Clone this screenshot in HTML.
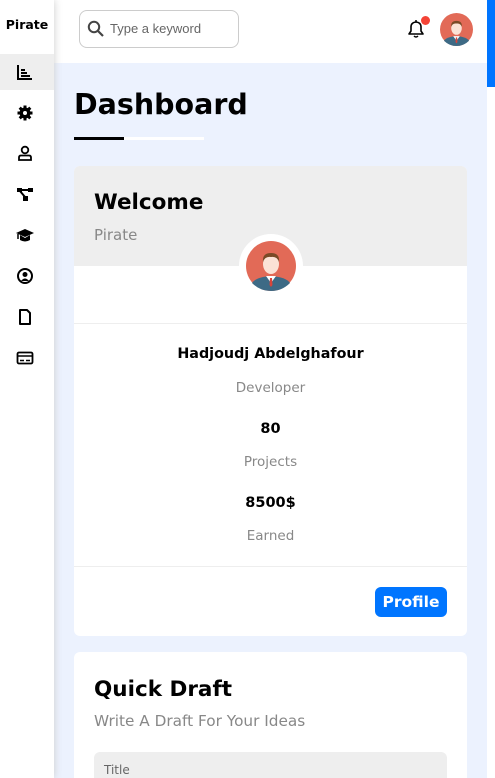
<!DOCTYPE html>
<html><head><meta charset="utf-8"><style>
*{margin:0;padding:0;box-sizing:border-box}
html{overflow:hidden;width:495px;height:778px}
body{width:495px;height:778px;overflow:hidden;background:#ecf2fe;font-family:"DejaVu Sans","Liberation Sans",sans-serif;position:relative}
.a{position:absolute}
.side{left:0;top:0;width:54px;height:778px;background:#fff;box-shadow:0 0 8px #ccc;z-index:3}
.ic{position:absolute;left:16px;width:18px;height:18px}
.head{left:54px;top:0;width:433px;height:63px;background:#fff}
.card{background:#fff;border-radius:6px;overflow:hidden}
.c{text-align:center;width:393px;left:0}
.g{color:#888;font-size:14px}
.b{font-weight:bold;font-size:15px;color:#000}
</style></head><body>
<div class="a side">
<div class="a" style="left:0;top:17px;width:54px;text-align:center;font-weight:bold;font-size:12.5px">Pirate</div>
<div class="a" style="left:0;top:54px;width:54px;height:36px;background:#eee"></div>
<svg class="ic" style="top:63px" viewBox="0 0 18 18"><path d="M2 2V16H16M5 13H14M5 10H11M5 7H9" stroke="#000" stroke-width="2" fill="none"/></svg>
<svg class="ic" style="top:104px" viewBox="0 0 18 18"><circle cx="9" cy="9" r="5.5" fill="#000"/><path d="M9 1.5V16.5M1.5 9H16.5M3.7 3.7L14.3 14.3M14.3 3.7L3.7 14.3" stroke="#000" stroke-width="3"/><circle cx="9" cy="9" r="2" fill="#fff"/></svg>
<svg class="ic" style="top:144px" viewBox="0 0 18 18"><circle cx="9" cy="6" r="3.3" stroke="#000" stroke-width="1.8" fill="none"/><path d="M3 16V13.5Q3 11.5 5 11.5H13Q15 11.5 15 13.5V16Z" stroke="#000" stroke-width="1.8" fill="none"/></svg>
<svg class="ic" style="top:185px" viewBox="0 0 18 18"><rect x="1" y="3" width="5" height="4" fill="#000"/><rect x="12" y="3" width="5" height="4" fill="#000"/><rect x="7" y="11" width="5" height="5" fill="#000"/><path d="M5 5H13M4 6L9 12" stroke="#000" stroke-width="2"/></svg>
<svg class="ic" style="top:226px" viewBox="0 0 18 18"><path d="M0 7L9 3L18 7L9 11Z" fill="#000"/><path d="M4 9V14Q9 17 14 14V9L9 12Z" fill="#000"/><path d="M2 8V13" stroke="#000" stroke-width="1.5"/></svg>
<svg class="ic" style="top:267px" viewBox="0 0 18 18"><circle cx="9" cy="9" r="7" stroke="#000" stroke-width="2" fill="none"/><circle cx="9" cy="7.5" r="2.5" fill="#000"/><path d="M5 14Q9 9 13 14" fill="#000"/></svg>
<svg class="ic" style="top:308px" viewBox="0 0 18 18"><path d="M4 2H11L14 5V16H4Z" stroke="#000" stroke-width="2" fill="none" stroke-linejoin="round"/></svg>
<svg class="ic" style="top:349px" viewBox="0 0 18 18"><rect x="1.5" y="3.5" width="15" height="11" rx="1.5" stroke="#000" stroke-width="1.8" fill="none"/><path d="M1.5 7H16.5M4 11.5H8M10 11.5H14" stroke="#000" stroke-width="1.5"/></svg>
</div>
<div class="a head">
<div class="a" style="left:25px;top:10px;width:160px;height:38px;border:1px solid #ccc;border-radius:8px"></div>
<svg class="a" style="left:33px;top:20px" width="18" height="18" viewBox="0 0 18 18"><circle cx="7" cy="7" r="5.2" stroke="#444" stroke-width="2" fill="none"/><path d="M11 11L16 16" stroke="#444" stroke-width="2.2"/></svg>
<div class="a" style="left:56px;top:21px;font-size:13px;color:#666;font-family:'Liberation Sans',sans-serif">Type a keyword</div>
<svg class="a" style="left:351px;top:18px" width="22" height="22" viewBox="0 0 22 22"><path d="M4 16H18L16 13V9Q16 4.5 11 4Q6 4.5 6 9V13Z" stroke="#000" stroke-width="1.6" fill="none" stroke-linejoin="round"/><path d="M9 18Q11 20 13 18M11 2V4" stroke="#000" stroke-width="1.5" fill="none"/></svg>
<div class="a" style="left:367px;top:16px;width:9px;height:9px;border-radius:50%;background:#f44336"></div>
<svg class="a" style="left:386px;top:13px" width="33" height="33" viewBox="0 0 50 50"><circle cx="25" cy="25" r="25" fill="#e26a57"/><path d="M6 42Q10 36 25 35Q40 36 44 42Q36 50 25 50Q14 50 6 42Z" fill="#3d6a85"/><path d="M20 35L25 42L30 35Z" fill="#fff"/><path d="M24 37L26 37L26.5 44L25 46L23.5 44Z" fill="#d9453a"/><ellipse cx="25" cy="23" rx="8" ry="10" fill="#fbe2d6"/><path d="M17 21Q16 12 25 12Q34 12 33 21Q31 15 25 16Q19 15 17 21Z" fill="#7a4a26"/></svg>
</div>
<div class="a" style="left:487px;top:0;width:8px;height:778px;background:#fff"></div>
<div class="a" style="left:487px;top:0;width:8px;height:87px;background:#0075ff"></div>
<div class="a" style="left:74px;top:88px;font-size:28.5px;font-weight:bold">Dashboard</div>
<div class="a" style="left:74px;top:137px;width:130px;height:3px;background:#fff"></div>
<div class="a" style="left:74px;top:137px;width:50px;height:3px;background:#000"></div>

<div class="a card" style="left:74px;top:166px;width:393px;height:470px">
<div class="a" style="left:0;top:0;width:393px;height:100px;background:#eee"></div>
<div class="a" style="left:20px;top:24px;font-size:21.5px;font-weight:bold">Welcome</div>
<div class="a g" style="left:20px;top:60px;font-size:15px">Pirate</div>
<div class="a" style="left:165px;top:68px;width:64px;height:64px;border-radius:50%;background:#fff"></div>
<svg class="a" style="left:172px;top:75px" width="50" height="50" viewBox="0 0 50 50"><circle cx="25" cy="25" r="25" fill="#e26a57"/><path d="M6 42Q10 36 25 35Q40 36 44 42Q36 50 25 50Q14 50 6 42Z" fill="#3d6a85"/><path d="M20 35L25 42L30 35Z" fill="#fff"/><path d="M24 37L26 37L26.5 44L25 46L23.5 44Z" fill="#d9453a"/><ellipse cx="25" cy="23" rx="8" ry="10" fill="#fbe2d6"/><path d="M17 21Q16 12 25 12Q34 12 33 21Q31 15 25 16Q19 15 17 21Z" fill="#7a4a26"/></svg>
<div class="a" style="left:0;top:157px;width:393px;height:1px;background:#eee"></div>
<div class="a c b" style="top:180px;font-size:14.3px">Hadjoudj Abdelghafour</div>
<div class="a c g" style="top:214px;font-size:13.5px">Developer</div>
<div class="a c b" style="top:255px;font-size:14.5px">80</div>
<div class="a c g" style="top:288px;font-size:13.5px">Projects</div>
<div class="a c b" style="top:329px;font-size:14.5px">8500$</div>
<div class="a c g" style="top:362px;font-size:13.5px">Earned</div>
<div class="a" style="left:0;top:400px;width:393px;height:1px;background:#eee"></div>
<div class="a" style="left:301px;top:421px;width:72px;height:30px;background:#0075ff;border-radius:6px;color:#fff;font-weight:bold;font-size:15.5px;text-align:center;line-height:30px">Profile</div>
</div>

<div class="a card" style="left:74px;top:652px;width:393px;height:140px">
<div class="a" style="left:20px;top:25px;font-size:21.5px;font-weight:bold">Quick Draft</div>
<div class="a g" style="left:20px;top:60px;font-size:15.3px">Write A Draft For Your Ideas</div>
<div class="a" style="left:20px;top:100px;width:353px;height:40px;background:#eee;border-radius:6px"></div>
<div class="a" style="left:30px;top:111px;font-size:12px;color:#666">Title</div>
</div>
</body></html>
